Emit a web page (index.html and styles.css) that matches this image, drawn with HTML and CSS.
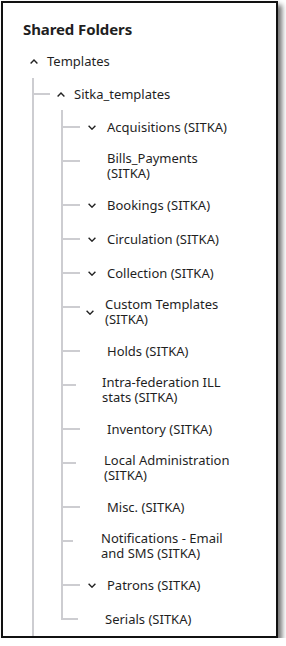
FILE: index.html
```html
<!DOCTYPE html>
<html lang="en">
<head>
    <meta charset="UTF-8">
    <meta name="viewport" content="width=device-width, initial-scale=1.0">
    <title>Shared Folders</title>
    <link rel="stylesheet" href="styles.css">
</head>
<body>
    <div class="panel">
        <h2 class="panel-title">Shared Folders</h2>

        <ul class="tree">
            <li class="root">
                <div class="row row-top">
                    <span class="toggle"><svg width="8" height="5" viewBox="0 0 8 5"><polyline points="0.6,4.4 4,1 7.4,4.4"/></svg></span>
                    <span class="label">Templates</span>
                </div>
                <ul class="branch">
                    <li class="node">
                        <div class="row row-mid">
                            <span class="link"></span>
                            <span class="toggle"><svg width="8" height="5" viewBox="0 0 8 5"><polyline points="0.6,4.4 4,1 7.4,4.4"/></svg></span>
                            <span class="label">Sitka_templates</span>
                        </div>
                        <ul class="branch sub">
                            <li class="node">
                                <div class="row">
                                    <span class="link"></span>
                                    <span class="toggle"><svg width="8" height="5" viewBox="0 0 8 5"><polyline points="0.6,0.8 4,4.2 7.4,0.8"/></svg></span>
                                    <span class="label">Acquisitions (SITKA)</span>
                                </div>
                            </li>
                            <li class="node">
                                <div class="row">
                                    <span class="link"></span>
                                    <span class="toggle"></span>
                                    <span class="label">Bills_Payments (SITKA)</span>
                                </div>
                            </li>
                            <li class="node">
                                <div class="row">
                                    <span class="link"></span>
                                    <span class="toggle"><svg width="8" height="5" viewBox="0 0 8 5"><polyline points="0.6,0.8 4,4.2 7.4,0.8"/></svg></span>
                                    <span class="label">Bookings (SITKA)</span>
                                </div>
                            </li>
                            <li class="node">
                                <div class="row">
                                    <span class="link"></span>
                                    <span class="toggle"><svg width="8" height="5" viewBox="0 0 8 5"><polyline points="0.6,0.8 4,4.2 7.4,0.8"/></svg></span>
                                    <span class="label">Circulation (SITKA)</span>
                                </div>
                            </li>
                            <li class="node">
                                <div class="row">
                                    <span class="link"></span>
                                    <span class="toggle"><svg width="8" height="5" viewBox="0 0 8 5"><polyline points="0.6,0.8 4,4.2 7.4,0.8"/></svg></span>
                                    <span class="label">Collection (SITKA)</span>
                                </div>
                            </li>
                            <li class="node nudge-a">
                                <div class="row">
                                    <span class="link"></span>
                                    <span class="toggle"><svg width="8" height="5" viewBox="0 0 8 5"><polyline points="0.6,0.8 4,4.2 7.4,0.8"/></svg></span>
                                    <span class="label">Custom Templates (SITKA)</span>
                                </div>
                            </li>
                            <li class="node">
                                <div class="row">
                                    <span class="link"></span>
                                    <span class="toggle"></span>
                                    <span class="label">Holds (SITKA)</span>
                                </div>
                            </li>
                            <li class="node nudge-b">
                                <div class="row">
                                    <span class="link"></span>
                                    <span class="toggle"></span>
                                    <span class="label">Intra-federation ILL stats (SITKA)</span>
                                </div>
                            </li>
                            <li class="node">
                                <div class="row">
                                    <span class="link"></span>
                                    <span class="toggle"></span>
                                    <span class="label">Inventory (SITKA)</span>
                                </div>
                            </li>
                            <li class="node nudge-c">
                                <div class="row">
                                    <span class="link"></span>
                                    <span class="toggle"></span>
                                    <span class="label">Local Administration (SITKA)</span>
                                </div>
                            </li>
                            <li class="node">
                                <div class="row">
                                    <span class="link"></span>
                                    <span class="toggle"></span>
                                    <span class="label">Misc. (SITKA)</span>
                                </div>
                            </li>
                            <li class="node nudge-d">
                                <div class="row">
                                    <span class="link"></span>
                                    <span class="toggle"></span>
                                    <span class="label">Notifications - Email and SMS (SITKA)</span>
                                </div>
                            </li>
                            <li class="node">
                                <div class="row">
                                    <span class="link"></span>
                                    <span class="toggle"><svg width="8" height="5" viewBox="0 0 8 5"><polyline points="0.6,0.8 4,4.2 7.4,0.8"/></svg></span>
                                    <span class="label">Patrons (SITKA)</span>
                                </div>
                            </li>
                            <li class="node">
                                <div class="row">
                                    <span class="link"></span>
                                    <span class="toggle"></span>
                                    <span class="label">Serials (SITKA)</span>
                                </div>
                            </li>
                        </ul>
                    </li>
                </ul>
            </li>
        </ul>
    </div>
</body>
</html>
```

FILE: styles.css
```css
:root {
    --text: #1f1f1f;
    --line: #cdcdd1;
}

body {
    margin: 0;
    font-family: "Noto Sans", "Open Sans", sans-serif;
    color: var(--text);
    background: #fff;
}

.panel {
    box-sizing: border-box;
    width: 277px;
    height: 637px;
    margin: 1px 0 0 1px;
    padding: 16px 0 0 20px;
    border: 2px solid #111;
    box-shadow: 4px 4px 5px rgba(0, 0, 0, 0.55);
    background: #fff;
    overflow: hidden;
}

.panel-title {
    margin: 0 0 6px;
    font-size: 15px;
    font-weight: 700;
    line-height: 20px;
    letter-spacing: -0.1px;
}

ul {
    list-style: none;
    margin: 0;
    padding: 0;
}

.row {
    box-sizing: border-box;
    display: flex;
    align-items: center;
    min-height: 34px;
    padding: 7px 0;
    font-size: 13px;
    line-height: 15px;
}

.row-top {
    min-height: 33px;
}

.row-mid {
    min-height: 32px;
}

.toggle {
    flex: none;
    display: flex;
    align-items: center;
    justify-content: center;
    width: 8px;
    margin-left: 7px;
}

.toggle svg {
    fill: none;
    stroke: #222;
    stroke-width: 1.4;
}

.label {
    margin-left: 9px;
    max-width: 128px;
}

.link {
    flex: none;
    align-self: flex-start;
    width: 16px;
    height: 2px;
    margin-top: 8px;
    background: var(--line);
}

.branch {
    margin-left: 9px;
}

.node {
    border-left: 2px solid var(--line);
}

/* second level */
.sub {
    margin-left: 27px;
}

.sub .link {
    width: 17px;
    margin-top: 9px;
}

.sub .toggle {
    margin-left: 8px;
}

.sub .label {
    margin-left: 11px;
}

.sub > .node:last-child {
    border-left-color: transparent;
}

.sub > .node:last-child .link {
    width: 15px;
    height: 16px;
    margin-top: -7px;
    margin-left: -2px;
    background: none;
    border-left: 2px solid var(--line);
    border-bottom: 2px solid var(--line);
}

.sub .nudge-a .toggle {
    margin-left: 6px;
}

.sub .nudge-b .link,
.sub .nudge-c .link {
    width: 13px;
}

.sub .nudge-b .label {
    margin-left: 10px;
}

.sub .nudge-c .label {
    margin-left: 12px;
}

.sub .nudge-d .link {
    width: 10px;
}

.sub .nudge-d .label {
    margin-left: 12px;
}
```
